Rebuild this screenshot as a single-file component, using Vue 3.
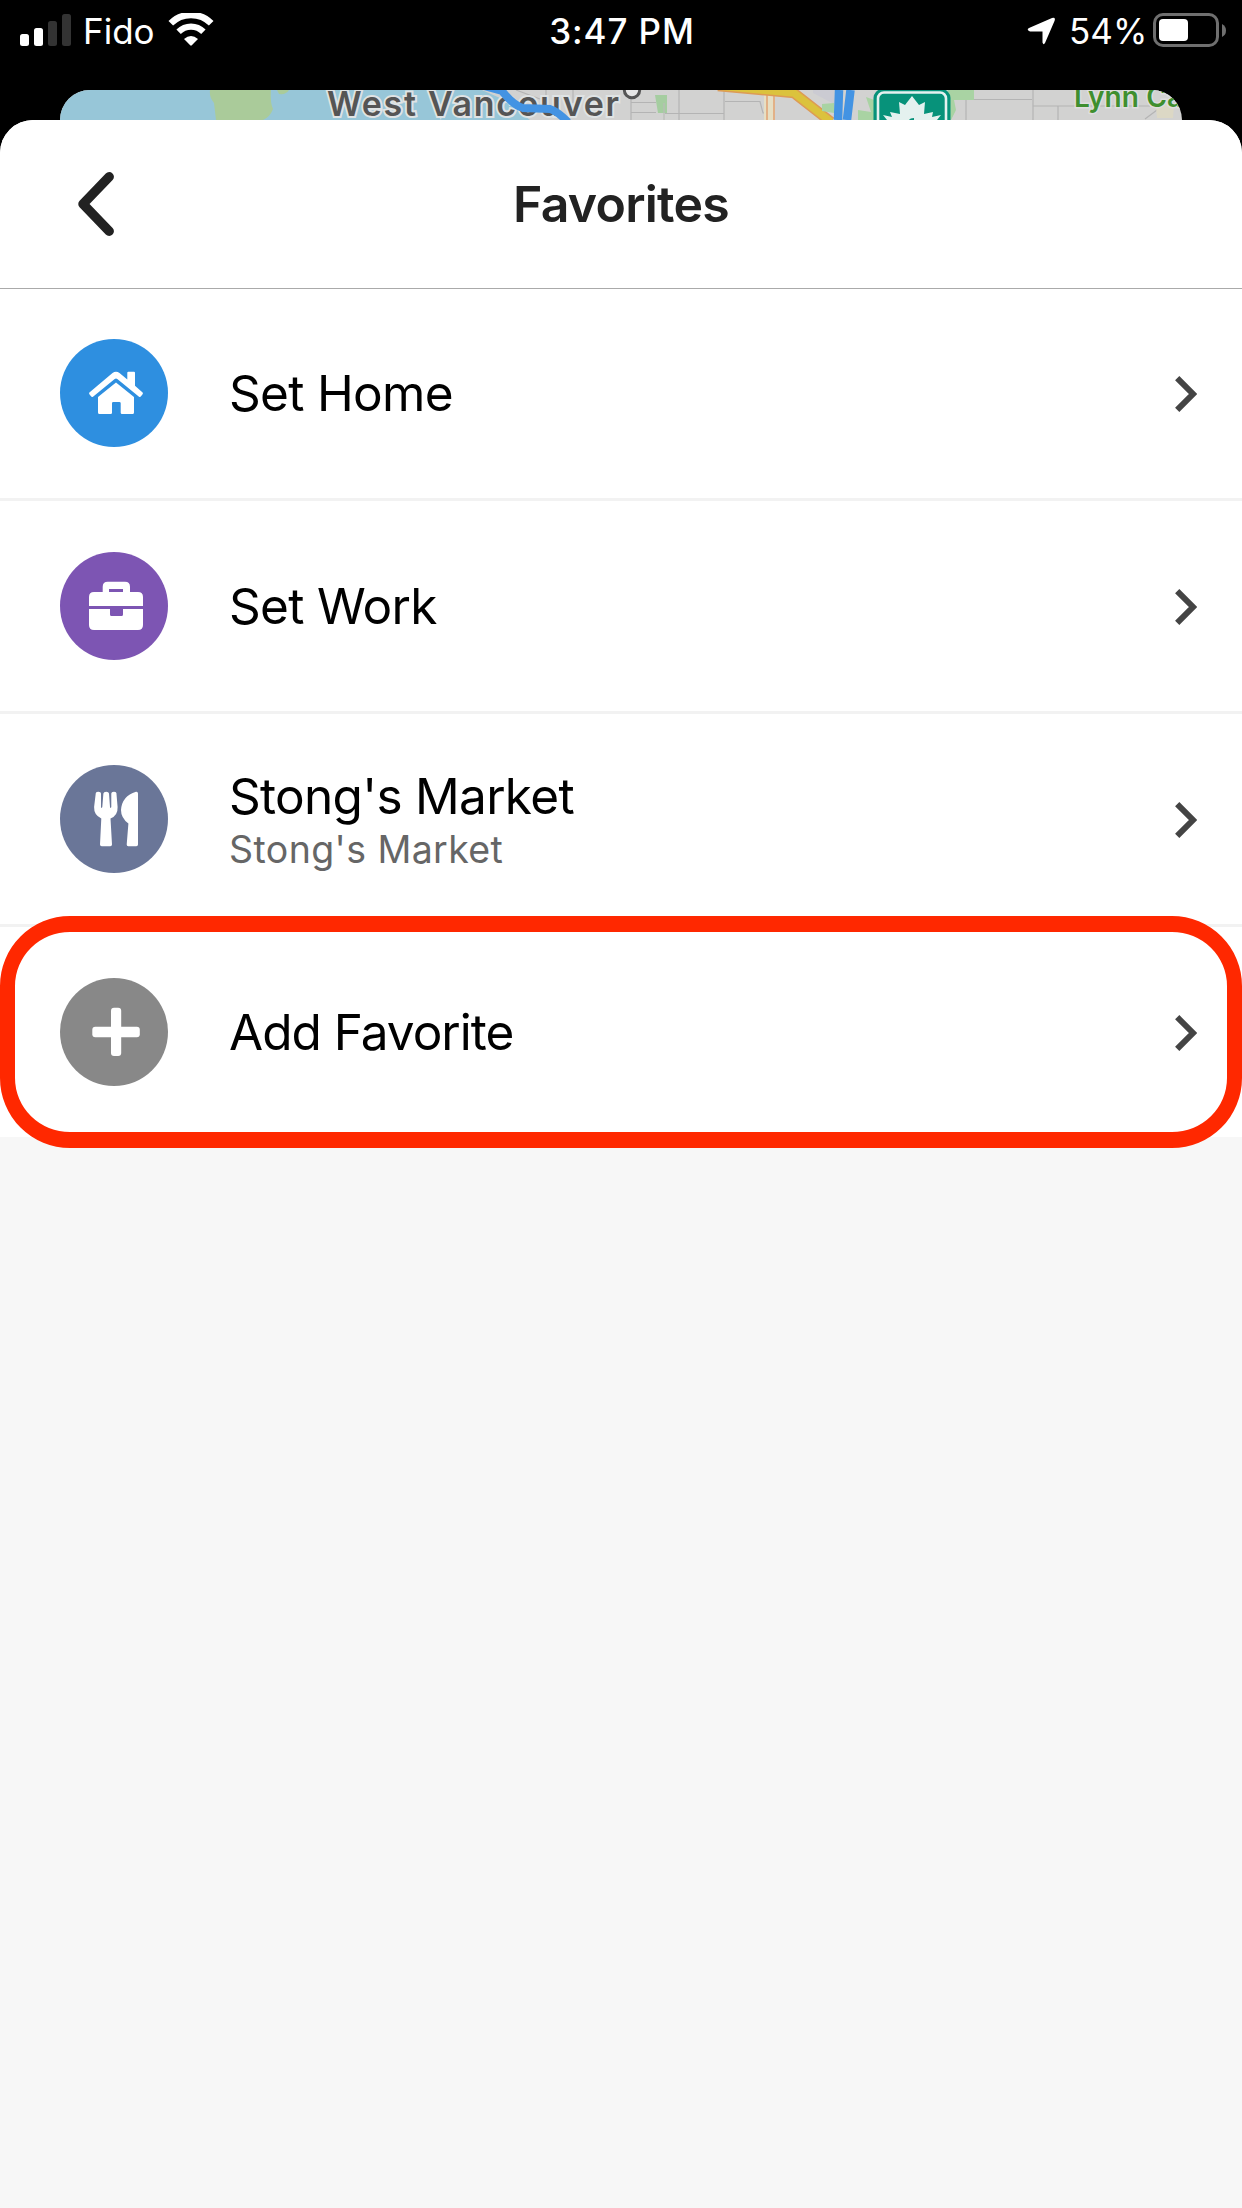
<script setup>
const rows = [
  { id: 'home', title: 'Set Home', color: '#2e8fe0' },
  { id: 'work', title: 'Set Work', color: '#7d55b3' },
  { id: 'food', title: "Stong's Market", subtitle: "Stong's Market", color: '#6a7698' },
  { id: 'add', title: 'Add Favorite', color: '#888888' },
]
</script>

<template>
  <div class="screen">
    <header class="status">
      <div class="side">
        <svg class="signal" width="51" height="32" viewBox="0 0 51 32">
          <rect x="0" y="20" width="9" height="12" rx="2.5" fill="#fff" />
          <rect x="14" y="14" width="9" height="18" rx="2.5" fill="#fff" />
          <rect x="28" y="7" width="9" height="25" rx="2.5" fill="#333" />
          <rect x="42" y="0" width="9" height="32" rx="2.5" fill="#333" />
        </svg>
        <span class="carrier">Fido</span>
        <svg class="wifi" width="46" height="34" viewBox="0 0 46 34">
          <path d="M2.800 10.300 A28.500 28.500 0 0 1 43.200 10.300" fill="none" stroke="#fff" stroke-width="6.500" />
          <path d="M10.600 18.800 A17.500 17.500 0 0 1 35.400 18.800" fill="none" stroke="#fff" stroke-width="6.200" />
          <path d="M16 26 Q23 20 30 26 L23.800 32.300 Q23 33 22.200 32.300 Z" fill="#fff" />
        </svg>
      </div>
      <div class="clock">3:47 PM</div>
      <div class="side right">
        <svg class="arrow" width="30" height="28" viewBox="0 0 30 28">
          <path d="M2 11 L25 1 Q29 0 27.500 4 L18 26 Q16.500 28.500 15.500 25.500 V14.500 H3 Q-1 13 2 11 Z" fill="#fff" />
        </svg>
        <span class="percent">54%</span>
        <svg class="battery" width="74" height="34" viewBox="0 0 74 34">
          <rect x="1.500" y="1.500" width="63" height="31" rx="8.500" fill="none" stroke="#6f6f6f" stroke-width="3" />
          <rect x="6" y="6" width="29" height="22" rx="4" fill="#fff" />
          <path d="M69 11 Q73 13 73 17.500 Q73 22 69 24 Z" fill="#6f6f6f" />
        </svg>
      </div>
    </header>

    <div class="map">
      <svg width="1122" height="30" viewBox="60 90 1122 30">
        <rect x="60" y="90" width="1122" height="30" fill="#d2d2d1" />
        <path d="M60 90 H482 L500 98 L520 112 L530 120 H60 Z" fill="#97c6d8" />
        <path d="M210 90 H271 Q270 103 273 109 Q270 117 263 120 H216 L214 103 Q209 97 210 90 Z" fill="#aacb9a" />
        <path d="M277 90 H289 Q286 95 279 94 Z" fill="#aacb9a" />
        <g fill="none" stroke="#b4b4b4" stroke-width="1.200">
          <path d="M516 90 L540 99 M546 90 V100 M573 90 V103 M631 97 V120 M679 90 V120 M724 90 V120 M631 102.500 H656 M665 113.500 H724 M631 112.500 H656 M725 101.500 H760 L763 113 H767 M966 90 V120 M950 99.500 H1032 M1033 90 V120 M1033 106 H1150 M1058 106 V120 M1145 119 L1165 104" />
        </g>
        <path d="M655 95 H667 V113 H658 Z" fill="#a5cda0" />
        <path d="M664 103 V120" stroke="#b9bdb7" stroke-width="1.200" />
        <path d="M813 90 H834 V104 L813 93 Z" fill="#cbcbd2" />
        <path d="M764 94 H775 V120 H764 Z" fill="#e6dfc4" />
        <path d="M767 95 V120 M774 95 V120" stroke="#e0a273" stroke-width="1.500" />
        <path d="M718 86 L794 93 L831 122" fill="none" stroke="#dd9b55" stroke-width="10.500" />
        <path d="M718 86 L794 93 L831 122" fill="none" stroke="#dbc23d" stroke-width="7.500" />
        <path d="M822 104 L834 103 V113 L822 111 Z" fill="#a9d3a3" />
        <path d="M822 113 L832 120 H822 Z" fill="#dbc23d" />
        <path d="M839 90 L838 120 M850.500 90 L847 120" stroke="#4393e3" stroke-width="8.500" />
        <path d="M858 110 L871 112 L866 97 L880 102 V120 H858 Z M948 90 H974 V100 H954 L956 110 L951 120 H945 Z" fill="#a9d3a3" />
        <rect x="873.500" y="89" width="77" height="50" rx="9" fill="#07927a" />
        <rect x="878" y="92.500" width="68" height="50" rx="6" fill="none" stroke="#e4f1ef" stroke-width="2.600" />
        <path d="M883 115 L892 117 L890 112 L900 114 L899 102 L905 105 L912 96 L919 105 L925 102 L924 114 L933 112 L932 117 L941 115 L937 120 H887 Z" fill="#e4f1ef" />
        <path d="M909 120 Q910 118 914 118 V120 Z" fill="#07927a" />
        <path d="M1156 107 L1168 101 L1174 105 L1173 118 H1157 Z" fill="#dcd8c5" />
        <circle cx="632" cy="90" r="7.700" fill="#e6e6e6" stroke="#555" stroke-width="3" />
        <text class="city" x="327" y="116" textLength="292">West Vancouver</text>
        <path d="M477 84 L502 91 Q513 105 523 108 L550 109 Q557 111 568 122" fill="none" stroke="#4393e3" stroke-width="8" />
        <text class="town" x="1074" y="107" textLength="109">Lynn Ca</text>
      </svg>
    </div>

    <main class="sheet">
      <div class="titlebar">
        <svg class="back" width="36" height="64" viewBox="0 0 36 64">
          <path d="M31.200 4.800 L5 32 L31.200 59.200" fill="none" stroke="#222" stroke-width="9.500" stroke-linecap="round" stroke-linejoin="round" />
        </svg>
        <h1>Favorites</h1>
      </div>

      <ul class="list">
        <li v-for="row in rows" :key="row.id" class="row" :class="row.id">
          <svg class="badge" width="108" height="108" viewBox="0 0 108 108">
            <circle cx="54" cy="54" r="54" :fill="row.color" />
            <g v-if="row.id === 'home'" fill="#fff">
              <path d="M29.400 53.500 L52.500 34 Q56 31.300 59.500 34 L67.300 40.500 V33.700 Q67.300 32.700 68.300 32.700 H74 Q75 32.700 75 33.700 V46.800 L82.600 53.500 Q83.300 54.300 82.600 55.200 L80.800 57.600 Q80 58.500 79 57.700 L57.300 40 Q56 39 54.700 40 L33 57.700 Q32 58.500 31.200 57.600 L29.400 55.200 Q28.700 54.300 29.400 53.500 Z" />
              <path d="M56 43.600 L74 58 V73.500 Q74 75 72.500 75 H62 Q60.700 75 60.700 73.700 V64.300 Q60.700 63 59.400 63 H53.300 Q52 63 52 64.300 V73.700 Q52 75 50.700 75 H39.500 Q38 75 38 73.500 V58 Z" />
            </g>
            <g v-else-if="row.id === 'work'" fill="#fff">
              <path fill-rule="evenodd" d="M42.700 40 V34.700 Q42.700 29.800 47.700 29.800 H65 Q70 29.800 70 34.700 V40 H78 Q83 40 83 45 V54 H29 V45 Q29 40 34 40 Z M49 37 V40 H63 V37 Z" />
              <path d="M29 57 H50 V62.500 Q50 64 51.500 64 H61.500 Q63 64 63 62.500 V57 H83 V73 Q83 78 78 78 H34 Q29 78 29 73 Z" />
            </g>
            <g v-else-if="row.id === 'food'" fill="#fff">
              <path d="M35.800 28 Q36.200 26.700 38.500 26.700 Q41 26.700 41 28.500 V42 Q41.500 44 42.300 42 L43.400 28.500 Q43.600 26.700 46.200 26.700 Q48.800 26.700 49 28.500 L50 42 Q50.600 44 51.300 42 V28.500 Q51.300 26.700 53.800 26.700 Q56 26.700 56.400 28 L57.600 42 Q58 50.500 50.500 53.500 L52 79.500 Q52 81.200 50.300 81.200 H41.700 Q40 81.200 40 79.500 L41.300 53.500 Q33.800 50 34.100 42 Z" />
              <path d="M76 26.800 Q78 26.500 78 28.500 V79.500 Q78 81.200 76.300 81.200 H68.200 Q66.700 81.200 66.700 79.500 L68.400 58.500 Q61 53 61 45 Q62 31 76 26.800 Z" />
            </g>
            <g v-else fill="#fff">
              <rect x="51" y="29.800" width="10.200" height="48.200" rx="3" />
              <rect x="32.300" y="48.800" width="47.500" height="10.400" rx="3" />
            </g>
          </svg>
          <div class="label">
            <span class="title">{{ row.title }}</span>
            <span v-if="row.subtitle" class="subtitle">{{ row.subtitle }}</span>
          </div>
          <svg class="chevron" width="22" height="36" viewBox="0 0 22 36">
            <path d="M2.200 2.200 L18 18 L2.200 33.800" fill="none" stroke="#444" stroke-width="6" />
          </svg>
          <div v-if="row.id === 'add'" class="highlight"></div>
        </li>
      </ul>
    </main>
  </div>
</template>

<style>
body {
  margin: 0;
  background: #000;
}
</style>

<style scoped>
.screen {
  width: 1242px;
  height: 2208px;
  display: flex;
  flex-direction: column;
  overflow: hidden;
  background: #000;
  font-family: Inter, "Liberation Sans", sans-serif;
}
.screen svg {
  display: block;
  flex: none;
}
.status {
  height: 90px;
  flex: none;
  box-sizing: border-box;
  padding: 0 15px 0 20px;
  display: flex;
  align-items: flex-start;
  color: #fff;
  font-size: 35px;
  line-height: 42px;
}
.side {
  flex: 1 1 0;
  display: flex;
  align-items: flex-start;
}
.right {
  justify-content: flex-end;
}
.signal {
  margin-top: 14px;
}
.carrier {
  width: 70px;
  margin: 10px 15px 0 12px;
  white-space: nowrap;
}
.wifi {
  margin-top: 13px;
}
.clock {
  margin: 10px 3px 0 0;
  font-weight: 500;
  letter-spacing: 0.9px;
}
.arrow {
  margin: 17px 12px 0 0;
}
.percent {
  width: 77px;
  margin: 10px 7px 0 0;
  white-space: nowrap;
}
.battery {
  margin-top: 13px;
}
.map {
  height: 30px;
  flex: none;
  margin: 0 60px;
  border-radius: 30px 30px 0 0;
  overflow: hidden;
}
.city {
  font-size: 34px;
  font-weight: 600;
  fill: #555;
  stroke: #dfe3e4;
  stroke-width: 4px;
  paint-order: stroke;
}
.town {
  font-size: 28px;
  font-weight: 600;
  fill: #3f8f2f;
  stroke: #dedede;
  stroke-width: 3px;
  paint-order: stroke;
}
.sheet {
  flex: 1;
  background: #f7f7f7;
  border-radius: 33px 33px 0 0;
  overflow: hidden;
}
.titlebar {
  position: relative;
  z-index: 1;
  height: 168px;
  margin-bottom: -1px;
  padding: 0 78px;
  display: flex;
  align-items: center;
  background: #fff;
  border-bottom: 1px solid #aaa;
}
h1 {
  flex: 1;
  margin: 0 36px 0 0;
  text-align: center;
  font-size: 50px;
  line-height: 60px;
  font-weight: 600;
  letter-spacing: -0.75px;
  color: #222;
}
.list {
  margin: 0;
  padding: 0;
  list-style: none;
}
.row {
  position: relative;
  height: 210px;
  padding: 0 45px 0 60px;
  display: flex;
  align-items: center;
  background: #fff;
  border-bottom: 3px solid #f2f2f2;
}
.row:last-child {
  border-bottom: 0;
}
.label {
  flex: 1;
  margin-left: 61px;
  display: flex;
  flex-direction: column;
}
.title {
  font-size: 49.5px;
  line-height: 60px;
  letter-spacing: -0.7px;
  color: #000;
}
.add .title {
  letter-spacing: -1px;
}
.subtitle {
  margin: 1px 0 -1px;
  font-size: 37.500px;
  line-height: 46px;
  letter-spacing: 0.4px;
  color: #666;
}
.chevron {
  margin-top: 2px;
}
.highlight {
  position: absolute;
  inset: -11px 0;
  border: 16px solid #ff2800;
  border-width: 16px 15px;
  border-radius: 70px;
}
</style>
